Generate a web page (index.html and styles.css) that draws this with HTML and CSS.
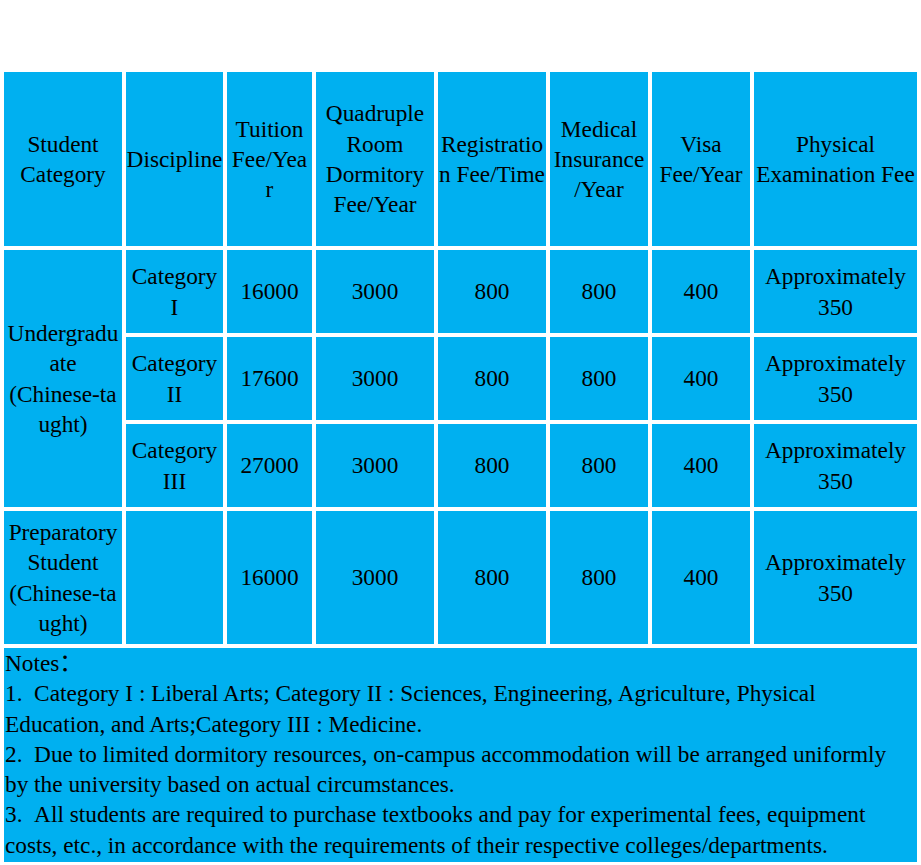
FILE: index.html
```html
<!DOCTYPE html>
<html lang="en">
<head>
<meta charset="utf-8">
<title>Fees</title>
<link rel="stylesheet" href="styles.css">
</head>
<body>
<div class="page">
  <table class="fees">
    <tr class="row-head">
      <td class="c1">Student Category</td>
      <td class="c2">Discipline</td>
      <td class="c3">Tuition Fee/Year</td>
      <td class="c4">Quadruple Room Dormitory Fee/Year</td>
      <td class="c5">Registration Fee/Time</td>
      <td class="c6">Medical Insurance /Year</td>
      <td class="c7">Visa Fee/Year</td>
      <td class="c8">Physical Examination Fee</td>
    </tr>
    <tr class="row-cat">
      <td rowspan="3">Undergraduate (Chinese&#8209;taught)</td>
      <td>Category I</td>
      <td>16000</td>
      <td>3000</td>
      <td>800</td>
      <td>800</td>
      <td>400</td>
      <td>Approximately 350</td>
    </tr>
    <tr class="row-cat">
      <td>Category II</td>
      <td>17600</td>
      <td>3000</td>
      <td>800</td>
      <td>800</td>
      <td>400</td>
      <td>Approximately 350</td>
    </tr>
    <tr class="row-cat">
      <td>Category III</td>
      <td>27000</td>
      <td>3000</td>
      <td>800</td>
      <td>800</td>
      <td>400</td>
      <td>Approximately 350</td>
    </tr>
    <tr class="row-prep">
      <td>Preparatory Student (Chinese&#8209;taught)</td>
      <td></td>
      <td>16000</td>
      <td>3000</td>
      <td>800</td>
      <td>800</td>
      <td>400</td>
      <td>Approximately 350</td>
    </tr>
    <tr class="row-notes">
      <td colspan="8" class="notes">
        <p>Notes：</p>
        <p>1.&nbsp;&nbsp;Category I : Liberal Arts; Category II : Sciences, Engineering, Agriculture, Physical Education, and Arts;Category III : Medicine.</p>
        <p>2.&nbsp;&nbsp;Due to limited dormitory resources, on-campus accommodation will be arranged uniformly by the university based on actual circumstances.</p>
        <p>3.&nbsp;&nbsp;All students are required to purchase textbooks and pay for experimental fees, equipment costs, etc., in accordance with the requirements of their respective colleges/departments.</p>
      </td>
    </tr>
  </table>
</div>
</body>
</html>
```

FILE: styles.css
```css
html, body {
  margin: 0;
  padding: 0;
  background: #ffffff;
}

.page {
  padding-top: 68px;
}

.fees {
  width: 921px;
  table-layout: fixed;
  border-collapse: separate;
  border-spacing: 4px;
  font-family: "Liberation Serif", "Times New Roman", "Noto Sans CJK SC", serif;
  font-size: 23.3px;
  line-height: 30.3px;
  color: #000000;
}

.fees td {
  background: #00b0f0;
  padding: 0;
  text-align: center;
  vertical-align: middle;
  overflow-wrap: break-word;
  word-wrap: break-word;
  box-sizing: border-box;
}

.c1 { width: 118px; }
.c2 { width: 97px; }
.c3 { width: 85px; padding: 0 2px !important; }
.c4 { width: 118px; }
.c5 { width: 108px; }
.c6 { width: 98px; }
.c7 { width: 98px; }
.c8 { width: 163px; }

.row-head { height: 174px; }
.row-cat { height: 83px; }
.row-prep { height: 133px; }
.row-notes { height: 214px; }

.fees td.notes {
  text-align: left;
  padding: 0 12px 0 1px;
  vertical-align: top;
}

.notes p {
  margin: 0;
}
```
